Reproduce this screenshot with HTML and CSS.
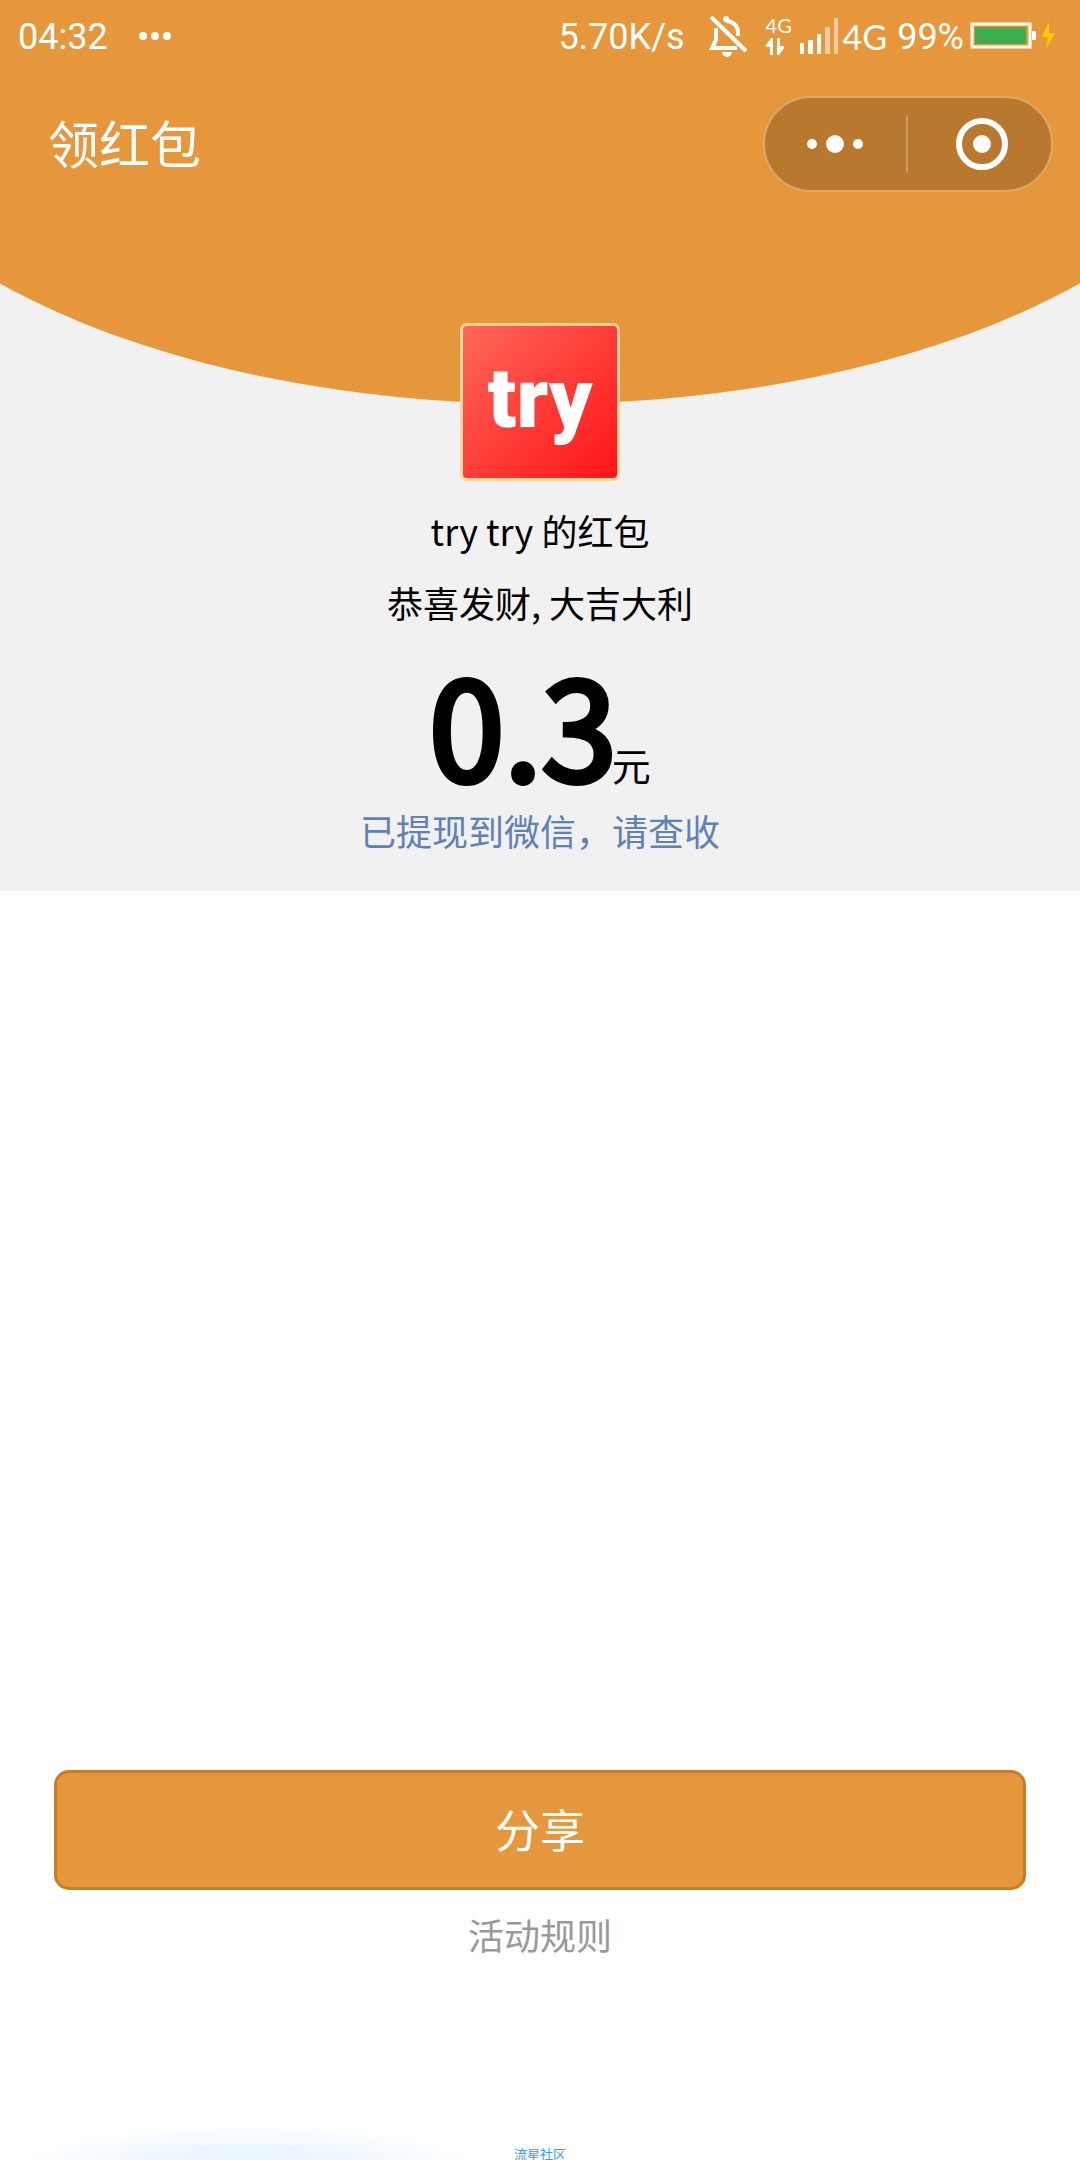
FILE: index.html
```html
<!DOCTYPE html>
<html lang="zh-CN">
<head>
<meta charset="utf-8">
<meta name="viewport" content="width=device-width, initial-scale=1">
<title>领红包</title>
<link rel="stylesheet" href="styles.css">
</head>
<body>
<div class="page">
  <section class="hero">
    <div class="status-bar">
      <span class="clock">04:32</span>
      <svg class="more" width="34" height="10" viewBox="0 0 34 10" fill="#fff"><circle cx="5" cy="5" r="4"/><circle cx="17" cy="5" r="4"/><circle cx="29" cy="5" r="4"/></svg>
      <span class="speed">5.70K/s</span>
      <svg class="mute" width="40" height="42" viewBox="0 0 40 42" fill="none" stroke="#fff" stroke-width="4">
        <path d="M8 13V25L4 33H29"/>
        <path d="M18 6C25 6 30 11 30 17V21"/>
        <path d="M3 2L38 36"/>
        <path d="M14 37H24A5 5 0 0 1 14 37Z" fill="#fff" stroke="none"/>
        <circle cx="18" cy="4" r="3" fill="#fff" stroke="none"/>
      </svg>
      <div class="data">
        <span class="data-label">4G</span>
        <svg width="18" height="17" viewBox="0 0 18 17" fill="#fff"><path d="M7 0V17H4V9H0V7L5 0ZM11 0H14V8H18V10L13 17H11Z"/></svg>
      </div>
      <svg class="signal" width="39" height="36" viewBox="0 0 39 36" fill="#fff"><path d="M0 25H4V36H0ZM8 22H13V36H8ZM17 16H21V36H17Z"/><path d="M25 9H30V36H25ZM34 0H38V36H34Z" opacity=".5"/></svg>
      <span class="network">4G</span>
      <span class="percent">99%</span>
      <svg class="battery" width="86" height="28" viewBox="0 0 86 28"><rect x="2" y="2" width="58" height="23" fill="none" stroke="#fff" stroke-width="3"/><rect x="5" y="5" width="51" height="17" fill="#3fae4c"/><path d="M62 9H65L66 10V17L65 18H62Z" fill="#fff"/><path d="M79 0L72 15H78L76 27L85 11H79Z" fill="#ffcd00"/></svg>
    </div>
    <header class="nav">
      <h1 class="title">领红包</h1>
      <div class="capsule">
        <button class="capsule-button" aria-label="更多"><svg width="58" height="20" viewBox="0 0 58 20" fill="#fff"><circle cx="6" cy="10" r="5"/><circle cx="29" cy="10" r="9"/><circle cx="52" cy="10" r="5"/></svg></button>
        <button class="capsule-button" aria-label="关闭"><svg width="52" height="52" viewBox="0 0 52 52"><circle cx="26" cy="26" r="23" fill="none" stroke="#fff" stroke-width="6"/><circle cx="26" cy="26" r="9" fill="#fff"/></svg></button>
      </div>
    </header>
    <div class="packet">
      <div class="avatar">try</div>
      <p class="line">try try 的红包</p>
      <p class="line">恭喜发财, 大吉大利</p>
      <p class="amount"><span class="number">0.3</span><span class="unit">元</span></p>
      <a class="notice" href="#">已提现到微信，请查收</a>
    </div>
  </section>
  <main class="actions">
    <button class="share">分享</button>
    <a class="rules" href="#">活动规则</a>
  </main>
  <footer class="footer">流星社区</footer>
</div>
</body>
</html>
```
FILE: styles.css
```css
* {
  box-sizing: border-box;
}

body {
  margin: 0;
  background: #fff;
  color: #000;
  font-family: "Noto Sans CJK SC", sans-serif;
}

h1,
p {
  margin: 0;
  font-weight: 400;
}

button {
  margin: 0;
  padding: 0;
  border: 0;
  background: none;
  font-family: inherit;
}

a {
  text-decoration: none;
}

svg {
  display: block;
  flex: none;
}

.page {
  display: flex;
  flex-direction: column;
  min-height: 100vh;
}

.hero {
  position: relative;
  overflow: hidden;
  padding-bottom: 34px;
  background: #f1f1f1;
}

/* curved orange backdrop behind the header */
.hero::before {
  content: "";
  position: absolute;
  top: -304px;
  left: 50%;
  width: 133%;
  height: 708px;
  border-radius: 50%;
  background: #e6973c;
  transform: translateX(-50%);
}

.status-bar,
.nav,
.packet {
  position: relative;
}

.status-bar {
  display: flex;
  align-items: center;
  height: 72px;
  padding: 0 24px 0 18px;
  color: #fff;
  font: 36px/48px Roboto, sans-serif;
}

.clock,
.speed,
.percent {
  padding-top: 2px;
}

.more {
  margin-left: 30px;
}

.speed {
  margin-left: auto;
}

.mute {
  margin-left: 23px;
}

.data {
  display: flex;
  flex-direction: column;
  align-items: flex-start;
  gap: 5px;
  width: 26px;
  margin-left: 18px;
}

.data-label {
  font: 20px/16px Lato, sans-serif;
}

.signal {
  margin-left: 8px;
}

.network {
  margin-left: 4px;
  padding-top: 2px;
  font-size: 34px;
  font-family: Lato, sans-serif;
}

.percent {
  margin: 0 6px 0 10px;
}

.nav {
  display: flex;
  align-items: center;
  justify-content: space-between;
  height: 144px;
  padding: 0 27px 0 48px;
}

.title {
  padding-bottom: 4px;
  color: #fff;
  font-size: 51px;
  line-height: 72px;
}

.capsule {
  display: flex;
  align-items: center;
  width: 290px;
  height: 96px;
  border: 2px solid #dba869;
  border-radius: 48px;
  background: #b8782e;
}

.capsule-button {
  display: flex;
  flex: 1;
  align-items: center;
  justify-content: center;
  height: 58px;
  padding-right: 2px;
}

.capsule-button + .capsule-button {
  padding: 0 0 0 4px;
  border-left: 2px solid #cb9a60;
}

.packet {
  display: flex;
  flex-direction: column;
  align-items: center;
  padding-top: 107px;
}

.avatar {
  width: 160px;
  height: 158px;
  margin-bottom: 13px;
  border: 3px solid #ffd6a0;
  border-radius: 7px;
  background: linear-gradient(135deg, #ff6759, #ff1418);
  color: #fff;
  font: 900 84px/146px Roboto, sans-serif;
  text-align: center;
}

.line {
  font-size: 36px;
  line-height: 72px;
}

.amount {
  display: flex;
  align-items: baseline;
  padding: 8px 0 5px;
}

.number {
  font-size: 135px;
  line-height: 152px;
  -webkit-text-stroke: 6px #000;
}

.unit {
  margin-left: -5px;
  font-size: 39px;
  line-height: 48px;
}

.notice {
  color: #6080b8;
  font-size: 36px;
  line-height: 54px;
}

.actions {
  display: flex;
  flex-direction: column;
  align-items: center;
  margin-top: auto;
  padding: 0 54px 139px;
}

.share {
  width: 100%;
  height: 120px;
  margin-bottom: 17px;
  padding-bottom: 3px;
  border: 3px solid #c87c26;
  border-radius: 15px;
  background: #e6973c;
  color: #fff;
  font-size: 45px;
}

.rules {
  color: #999;
  font-size: 36px;
  line-height: 54px;
}

.footer {
  height: 60px;
  overflow: hidden;
  padding-top: 45px;
  background: radial-gradient(ellipse 240px 54px at 23% 76px, #dceefe, rgba(255, 255, 255, 0)) no-repeat;
  color: #2f9df4;
  font-size: 13px;
  line-height: 18px;
  text-align: center;
}
```
